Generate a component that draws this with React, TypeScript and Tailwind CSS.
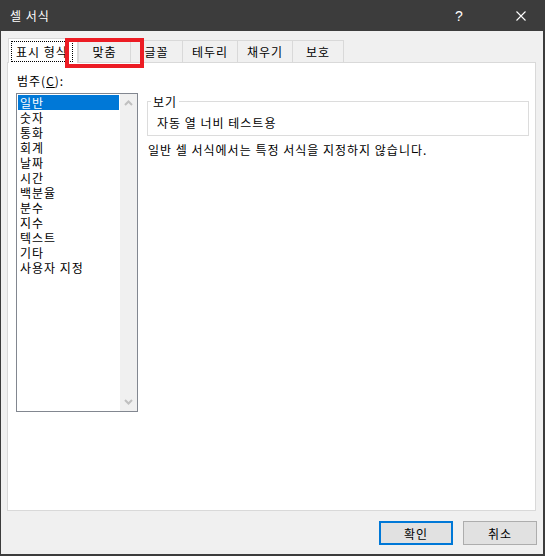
import React from "react";

const items = ["일반", "숫자", "통화", "회계", "날짜", "시간", "백분율", "분수", "지수", "텍스트", "기타", "사용자 지정"];

export default function App() {
  return (
    <div className="relative w-[545px] h-[556px] flex flex-col bg-[#3c3c3c] font-['Noto_Sans_CJK_KR',sans-serif] text-[12px] tracking-[1px] text-black">
      {/* title bar */}
      <div className="h-[31px] shrink-0 flex items-center text-white">
        <span className="ml-[10px] leading-[15px]">셀 서식</span>
        <span className="ml-auto w-[14px] text-center font-['Liberation_Sans',sans-serif] text-[14px] leading-[16px] tracking-normal">?</span>
        <svg className="ml-[50px] mr-[19px]" width="10" height="10" viewBox="0 0 10 10">
          <path d="M0.5 0.5L9.5 9.5M9.5 0.5L0.5 9.5" stroke="white" strokeWidth="1.1" />
        </svg>
      </div>

      {/* body */}
      <div className="flex-1 ml-[1px] mr-[2px] mb-[2px] bg-[#f0f0f0] pl-[6px] pr-[7px] pt-[7px] flex flex-col">
        {/* tabs */}
        <div className="relative z-10 h-[24px] flex items-end">
          <div className="ml-[1px] -mb-[1px] w-[70px] h-[25px] border border-b-0 border-[#d9d9d9] bg-white pt-[2px] pl-[2px]">
            <div className="w-[62px] h-[21px] border border-dotted border-black flex items-center justify-center leading-[15px]">
              표시 형식
            </div>
          </div>
          <div className="w-[52px] h-[22px] border-t border-l border-[#d9d9d9] flex items-center justify-center leading-[15px]">맞춤</div>
          <div className="w-[52px] h-[22px] border-t border-l border-[#d9d9d9] flex items-center justify-center leading-[15px]">글꼴</div>
          <div className="w-[55px] h-[22px] border-t border-l border-[#d9d9d9] flex items-center justify-center leading-[15px]">테두리</div>
          <div className="w-[55px] h-[22px] border-t border-l border-[#d9d9d9] flex items-center justify-center leading-[15px]">채우기</div>
          <div className="w-[52px] h-[22px] border-t border-l border-r border-[#d9d9d9] flex items-center justify-center leading-[15px]">보호</div>
        </div>

        {/* panel */}
        <div className="h-[449px] shrink-0 bg-white border border-[#d9d9d9] flex pl-[8px] pt-[10px]">
          {/* left column */}
          <div className="flex flex-col">
            <div className="ml-[1px] h-[15px] leading-[15px]">
              범주(<span className="underline">C</span>):
            </div>
            <div className="mt-[5px] w-[122px] h-[319px] border border-[#828790] flex">
              <div className="flex-1 p-[1px] flex flex-col">
                {items.map((it, i) => (
                  <div
                    key={it}
                    className={
                      i === 0
                        ? "h-[15px] leading-[15px] pl-[2px] bg-[#0078d7] text-white whitespace-nowrap"
                        : "h-[15px] leading-[15px] pl-[2px] whitespace-nowrap"
                    }
                  >
                    {it}
                  </div>
                ))}
              </div>
              <div className="w-[17px] bg-[#f0f0f0] flex flex-col items-center justify-between pt-[6px] pb-[6px]">
                <svg width="9" height="6" viewBox="0 0 9 6">
                  <path d="M1 5L4.5 1.5L8 5" fill="none" stroke="#c0c0c0" strokeWidth="2" />
                </svg>
                <svg width="9" height="6" viewBox="0 0 9 6">
                  <path d="M1 1L4.5 4.5L8 1" fill="none" stroke="#c0c0c0" strokeWidth="2" />
                </svg>
              </div>
            </div>
          </div>

          {/* right column */}
          <div className="ml-[9px] mt-[21px] flex flex-col">
            <fieldset className="w-[382px] border border-[#dcdcdc] pl-[3px] pb-[5px]">
              <legend className="px-[2px] leading-[15px]">보기</legend>
              <div className="ml-[6px] pt-[6px] leading-[15px]">자동 열 너비 테스트용</div>
            </fieldset>
            <div className="ml-[1px] mt-[6px] leading-[15px] whitespace-nowrap">일반 셀 서식에서는 특정 서식을 지정하지 않습니다.</div>
          </div>
        </div>

        {/* buttons */}
        <div className="mt-[10px] -mr-[1px] flex justify-end gap-[10px]">
          <div className="w-[74px] h-[24px] border-2 border-[#0078d7] bg-[#e1e1e1] flex items-center justify-center leading-[15px]">확인</div>
          <div className="w-[74px] h-[24px] border border-[#adadad] bg-[#e1e1e1] flex items-center justify-center leading-[15px]">취소</div>
        </div>
      </div>

      {/* annotation highlight */}
      <div className="absolute z-20 left-[65px] top-[38px] w-[79px] h-[30px] border-[4px] border-[#ec1c24]" />
    </div>
  );
}
